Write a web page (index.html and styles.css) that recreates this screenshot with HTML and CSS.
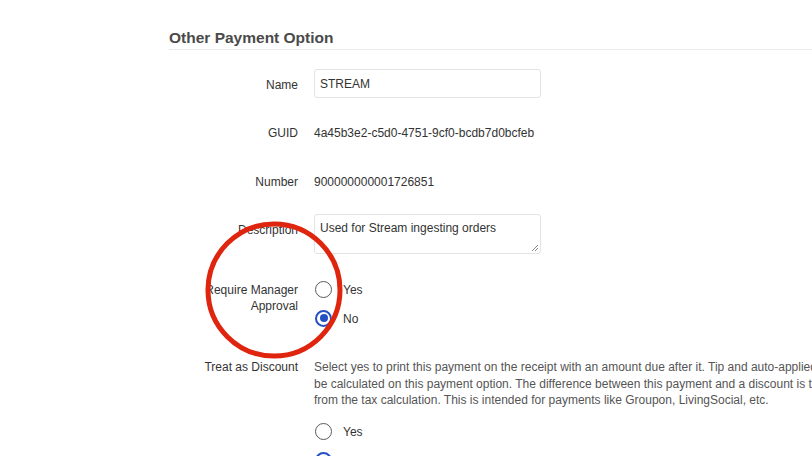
FILE: index.html
```html
<!DOCTYPE html>
<html lang="en">
<head>
<meta charset="utf-8">
<title>Other Payment Option</title>
<link rel="stylesheet" href="styles.css">
</head>
<body>
<div class="page">
  <h1 class="title">Other Payment Option</h1>
  <div class="form">
    <div class="row row-name">
      <div class="label label-input">Name</div>
      <div class="value"><div class="input">STREAM</div></div>
    </div>
    <div class="row row-guid">
      <div class="label">GUID</div>
      <div class="value text">4a45b3e2-c5d0-4751-9cf0-bcdb7d0bcfeb</div>
    </div>
    <div class="row row-number">
      <div class="label">Number</div>
      <div class="value text">900000000001726851</div>
    </div>
    <div class="row row-desc">
      <div class="label label-input">Description</div>
      <div class="value">
        <div class="textarea">Used for Stream ingesting orders
          <svg class="grip" width="8" height="8" viewBox="0 0 8 8"><path d="M7 1 L1 7 M7 4 L4 7" stroke="#888" stroke-width="1"/></svg>
        </div>
      </div>
    </div>
    <div class="row row-approval">
      <div class="label label-shift">Require Manager<br>Approval</div>
      <div class="value radios">
        <div class="option"><span class="radio"></span><span class="opt-text">Yes</span></div>
        <div class="option"><span class="radio checked"></span><span class="opt-text">No</span></div>
      </div>
    </div>
    <div class="row row-discount">
      <div class="label label-shift">Treat as Discount</div>
      <div class="value">
        <p class="help">Select yes to print this payment on the receipt with an amount due after it. Tip and auto-applied service charges will not<br>be calculated on this payment option. The difference between this payment and a discount is that it is not excluded<br>from the tax calculation. This is intended for payments like Groupon, LivingSocial, etc.</p>
        <div class="radios radios-discount">
          <div class="option"><span class="radio"></span><span class="opt-text">Yes</span></div>
          <div class="option"><span class="radio checked"></span><span class="opt-text">No</span></div>
        </div>
      </div>
    </div>
  </div>
  <svg class="annotation" width="144" height="142" viewBox="0 0 144 142">
    <ellipse cx="71" cy="70" rx="66" ry="66" fill="none" stroke="#e0250e" stroke-width="5"/>
  </svg>
</div>
</body>
</html>
```
FILE: styles.css
```css
html, body {
  margin: 0;
  padding: 0;
  background: #ffffff;
}
body {
  font-family: "Liberation Sans", Arial, sans-serif;
  font-size: 12px;
  color: #333333;
  overflow: hidden;
}
.page {
  position: relative;
  width: 812px;
  height: 456px;
  overflow: hidden;
  padding-left: 169px;
  box-sizing: border-box;
}
.title {
  margin: 0;
  padding-top: 28px;
  padding-bottom: 1px;
  height: 20px;
  line-height: 20px;
  font-size: 15.5px;
  font-weight: 700;
  color: #4a4a4a;
  border-bottom: 1px solid #ebebeb;
}
.form {
  display: flex;
  flex-direction: column;
}
.row {
  display: grid;
  grid-template-columns: 129px 1fr;
  column-gap: 16px;
  align-items: start;
}
.label {
  text-align: right;
  line-height: 16px;
  color: #333333;
  white-space: nowrap;
}
.label-input {
  padding-top: 8px;
}
.label-shift {
  padding-top: 1px;
}
.text {
  line-height: 16px;
  color: #333333;
}
.row-name { margin-top: 19px; }
.row-guid { margin-top: 27px; }
.row-number { margin-top: 33px; }
.row-desc { margin-top: 24px; }
.row-approval { margin-top: 27px; }
.row-discount { margin-top: 32px; }

.input {
  width: 227px;
  height: 29px;
  box-sizing: border-box;
  border: 1px solid #e3e3e3;
  border-radius: 3px;
  padding: 1px 6px 0 5px;
  line-height: 26px;
  color: #333;
  overflow: hidden;
}
.textarea {
  position: relative;
  width: 227px;
  height: 40px;
  box-sizing: border-box;
  border: 1px solid #e3e3e3;
  border-radius: 3px;
  padding: 5px 6px 0 5px;
  line-height: 16px;
  color: #333;
}
.grip {
  position: absolute;
  right: 1px;
  bottom: 1px;
}
.radios {
  display: flex;
  flex-direction: column;
  gap: 13px;
}
.option {
  display: flex;
  align-items: center;
  height: 16px;
}
.radio {
  width: 17px;
  height: 17px;
  box-sizing: border-box;
  border: 1.5px solid #5a5a5a;
  border-radius: 50%;
  margin-left: 1px;
  flex: none;
  display: flex;
  align-items: center;
  justify-content: center;
  background: #fff;
}
.radio.checked {
  border: 2px solid #2450c4;
}
.radio.checked::after {
  content: "";
  width: 8px;
  height: 8px;
  border-radius: 50%;
  background: #2450c4;
}
.opt-text {
  margin-left: 11px;
  padding-top: 1px;
  line-height: 16px;
  color: #333;
}
.help {
  margin: 0;
  padding-top: 1px;
  line-height: 16.6px;
  color: #555555;
  white-space: nowrap;
}
.radios-discount {
  margin-top: 15px;
}
.annotation {
  position: absolute;
  left: 203px;
  top: 220px;
}
```
